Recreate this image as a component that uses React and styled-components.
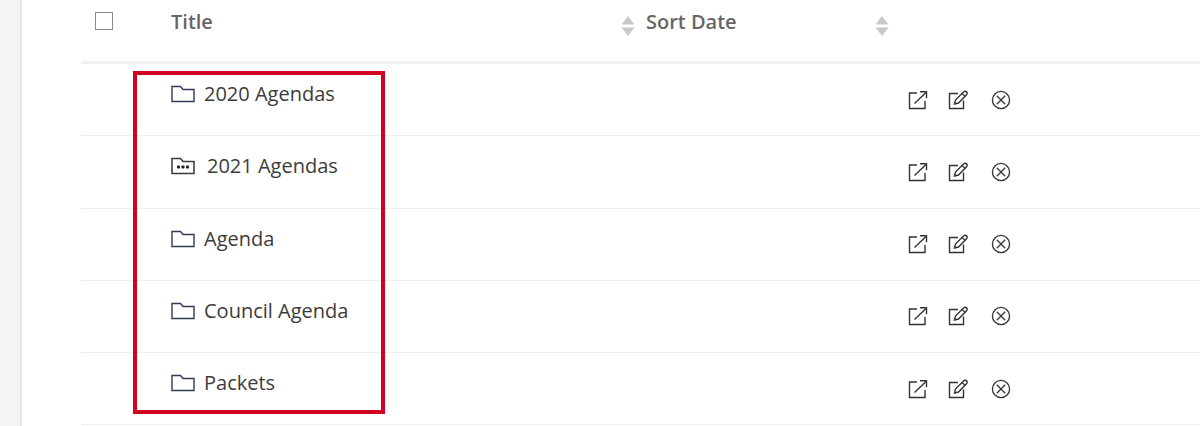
import React from 'react'
import styled, { createGlobalStyle } from 'styled-components'

const GlobalStyle = createGlobalStyle`
  html, body { margin: 0; padding: 0; background: #fff; }
  body { font-family: "Open Sans", "Liberation Sans", sans-serif; overflow: hidden; }
`

const rows = [
  { title: '2020 Agendas', dotted: false },
  { title: '2021 Agendas', dotted: true },
  { title: 'Agenda', dotted: false },
  { title: 'Council Agenda', dotted: false },
  { title: 'Packets', dotted: false },
]

const FolderIcon = () => (
  <FolderSvg width="24" height="18" viewBox="0 0 24 18" fill="none">
    <path d="M1 16.5V1.5H9.5L12 4.5H23V16.5H1Z" stroke="#323a55" strokeWidth="1.4" />
  </FolderSvg>
)

const DottedFolderIcon = () => (
  <FolderSvg width="24" height="18" viewBox="0 0 24 18" fill="none">
    <path d="M1 16.5V1.5H9.5L12 4.5H23V16.5H1Z" stroke="#3a3a3a" strokeWidth="1.5" />
    <rect x="6" y="8.5" width="3" height="3" rx="0.8" fill="#222" />
    <rect x="10.5" y="8.5" width="3" height="3" rx="0.8" fill="#222" />
    <rect x="15" y="8.5" width="3" height="3" rx="0.8" fill="#222" />
  </FolderSvg>
)

const OpenIcon = () => (
  <svg width="20" height="20" viewBox="0 0 20 20" fill="none" stroke="#333" strokeWidth="1.4">
    <path d="M9 3H1.5V18.5H17V11" />
    <path d="M6.5 13.5L18 2.5" />
    <path d="M12 1.8H18.5V8.3" />
  </svg>
)

const EditIcon = () => (
  <svg width="20" height="20" viewBox="0 0 20 20" fill="none" stroke="#333" strokeWidth="1.4">
    <path d="M10 3.5H1.5V18.5H15.5V10.5" />
    <path d="M6.5 14L7.5 10L15.5 2C16.5 1 18 1 18.7 2C19.4 3 19.2 4 18.5 4.8L10.5 13L6.5 14Z" />
    <path d="M14 3.5L17.3 6.5" />
  </svg>
)

const CloseIcon = () => (
  <svg width="20" height="20" viewBox="0 0 20 20" fill="none" stroke="#333" strokeWidth="1.3">
    <circle cx="10" cy="10" r="8.6" />
    <path d="M5.8 5.8L14.2 14.2M14.2 5.8L5.8 14.2" />
  </svg>
)

const SortArrows = () => (
  <SortSvg width="14" height="20" viewBox="0 0 14 20">
    <path d="M7 0L13.5 8.5H0.5Z" fill="#c8c8c8" />
    <path d="M7 20L0.5 11.5H13.5Z" fill="#c8c8c8" />
  </SortSvg>
)

function App() {
  return (
    <Page>
      <GlobalStyle />
      <Gutter />
      <Content>
        <Table>
          <HeaderRow>
            <CheckCell><Checkbox /></CheckCell>
            <TitleHead>Title</TitleHead>
            <SortHead><SortArrows /></SortHead>
            <DateHead>Sort Date<SortArrows /></DateHead>
          </HeaderRow>
          {rows.map(row => (
            <Row key={row.title}>
              <TitleCell>
                {row.dotted ? <DottedFolderIcon /> : <FolderIcon />}
                <RowTitle $dotted={row.dotted}>{row.title}</RowTitle>
              </TitleCell>
              <Actions>
                <OpenIcon />
                <EditIcon />
                <CloseIcon />
              </Actions>
            </Row>
          ))}
          <Highlight />
        </Table>
      </Content>
    </Page>
  )
}

const Page = styled.div`
  display: flex;
  width: 1200px;
  height: 426px;
  overflow: hidden;
`
const Gutter = styled.div`
  width: 20px;
  flex: none;
  background: #f4f4f4;
  border-right: 2px solid #e6e6e6;
`
const Content = styled.div`
  flex: 1;
  padding-left: 59px;
`
const Table = styled.div`
  position: relative;
  width: 1119px;
`
const HeaderRow = styled.div`
  display: flex;
  height: 61px;
  border-bottom: 3px solid #f2f2f2;
  color: #666;
  font-size: 20px;
  font-weight: 600;
  line-height: 24px;
`
const CheckCell = styled.div`
  width: 90px;
  padding: 12px 0 0 14px;
  box-sizing: border-box;
`
const Checkbox = styled.div`
  width: 18px;
  height: 18px;
  box-sizing: border-box;
  border: 1.5px solid #8a8a8a;
`
const TitleHead = styled.div`
  width: 450px;
  padding-top: 10px;
`
const SortHead = styled.div`
  width: 25px;
  padding-top: 16px;
`
const DateHead = styled.div`
  display: flex;
  justify-content: space-between;
  width: 243px;
  padding-top: 10px;
  svg {
    margin-top: 6px;
  }
`
const SortSvg = styled.svg`
  display: block;
`
const Row = styled.div`
  display: flex;
  justify-content: space-between;
  height: 72.25px;
  box-sizing: border-box;
  border-bottom: 1px solid #eeeeee;
`
const TitleCell = styled.div`
  display: flex;
  align-items: center;
  gap: 9px;
  height: 60px;
  padding-left: 90px;
`
const FolderSvg = styled.svg`
  flex: none;
`
const RowTitle = styled.span`
  margin-left: ${p => (p.$dotted ? '3px' : '0')};
  font-size: 20px;
  line-height: 24px;
  color: #3c3c3c;
`
const Actions = styled.div`
  display: flex;
  align-items: center;
  gap: 20px;
  margin-right: 189px;

  svg:last-child {
    margin-left: 3px;
  }
`
const Highlight = styled.div`
  position: absolute;
  left: 52px;
  top: 71px;
  width: 252px;
  height: 343px;
  box-sizing: border-box;
  border: 4px solid #d0021f;
  pointer-events: none;
`

export default App
